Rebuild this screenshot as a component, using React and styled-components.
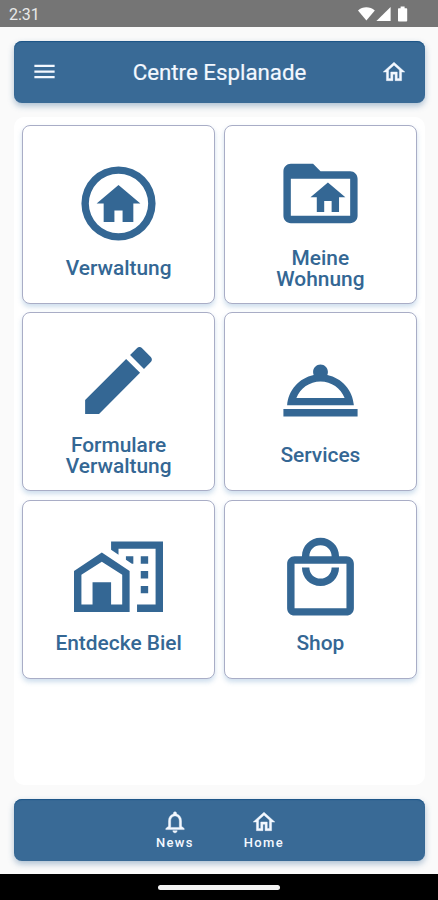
import React from 'react';
import styled, { createGlobalStyle } from 'styled-components';

const icons = {
    menu: 'M3 6h18v2H3zM3 11h18v2H3zM3 16h18v2H3z',
    home: 'M12 5.69L17 10.19V18H15V12H9V18H7V10.19L12 5.69M12 3L2 12H5V20H11V14H13V20H19V12H22Z',
    bell: 'M16 17H8V11c0-2.5 1.5-4.6 4-4.6s4 2.1 4 4.6zM12 22c1.1 0 2-.9 2-2h-4c0 1.1.9 2 2 2zM18 16v-5c0-3.1-1.6-5.6-4.5-6.3V4c0-.8-.7-1.5-1.5-1.5s-1.5.7-1.5 1.5v.7C7.6 5.4 6 7.9 6 11v5l-2.5 2v1h17v-1z',
    homeCircle: 'M12 2a10 10 0 1 0 0 20a10 10 0 1 0 0-20zM12 4a8 8 0 1 1 0 16a8 8 0 1 1 0-16zM12 7l5.9 5H16v5h-2.9v-3.1h-2.2V17H8v-5H6.1z',
    folderHome: 'M20 6h-8l-2-2H4c-1.1 0-2 .9-2 2v12c0 1.1.9 2 2 2h16c1.1 0 2-.9 2-2V8c0-1.1-.9-2-2-2zM20 18H4V8h16zM14 9l4.7 4H17v4h-2v-3h-2v3h-2v-4H9.3z',
    pencil: 'M20.71 7.04C21.1 6.65 21.1 6 20.71 5.63L18.37 3.29C18 2.9 17.35 2.9 16.96 3.29L15.12 5.12L18.87 8.87M3 17.25V21H6.75L17.81 9.93L14.06 6.18L3 17.25Z',
    service: 'M2 17h20v2H2zm11.84-9.21c.1-.24.16-.51.16-.79 0-1.1-.9-2-2-2s-2 .9-2 2c0 .28.06.55.16.79C6.25 8.6 3.27 11.93 3 16h18c-.27-4.07-3.25-7.4-7.16-8.21zM12 9.58c2.95 0 5.47 1.83 6.5 4.41h-13c1.03-2.58 3.55-4.41 6.5-4.41z',
    city: 'M10 2V4.26L12 5.59V4H22V19H17V21H24V2H10M7.5 5L0 10V21H15V10L7.5 5M14 6V6.93L15.61 8H16V6H14M18 6V8H20V6H18M7.5 7.5L13 11V19H10V13H5V19H2V11L7.5 7.5M18 10V12H20V10H18M18 14V16H20V14H18Z',
    shop: 'M19 6H17C17 3.2 14.8 1 12 1S7 3.2 7 6H5C3.9 6 3 6.9 3 8V20C3 21.1 3.9 22 5 22H19C20.1 22 21 21.1 21 20V8C21 6.9 20.1 6 19 6M12 3C13.7 3 15 4.3 15 6H9C9 4.3 10.3 3 12 3M19 20H5V8H19V20M12 12C10.3 12 9 10.7 9 9H7C7 11.8 9.2 14 12 14S17 11.8 17 9H15C15 10.7 13.7 12 12 12Z',
};

const tiles = [
    { icon: 'homeCircle', label: 'Verwaltung' },
    { icon: 'folderHome', label: 'Meine Wohnung' },
    { icon: 'pencil', label: 'Formulare Verwaltung' },
    { icon: 'service', label: 'Services' },
    { icon: 'city', label: 'Entdecke Biel' },
    { icon: 'shop', label: 'Shop' },
];

function Icon({ name, size, bold }) {
    return (
        <IconSvg viewBox="0 0 24 24" $size={size} $bold={bold}>
            <path fillRule="evenodd" d={icons[name]} />
        </IconSvg>
    )
}

export default function App() {
    return (
        <Screen>
            <GlobalStyle />
            <StatusBar>
                <span>2:31</span>
                <svg width="50" height="16" viewBox="0 0 50 16" fill="#fff">
                    <path d="M0 4.4C4.6.2 12 .2 16.8 4.4L8.4 14.6z" />
                    <path d="M32.6 1v14H18.4z" />
                    <path d="M42.6.6h4v1.6h1.6c.6 0 1 .4 1 1v11.200c0 .6-.4 1-1 1H41c-.6 0-1-.4-1-1V3.200c0-.6.4-1 1-1h1.600z" />
                </svg>
            </StatusBar>

            <Content>
                <Header>
                    <Button aria-label="Menu">
                        <Icon name="menu" size={27} />
                    </Button>
                    <Title>Centre Esplanade</Title>
                    <Button aria-label="Home">
                        <Icon name="home" size={26} bold />
                    </Button>
                </Header>

                <Panel>
                    {tiles.map((tile) => (
                        <Tile key={tile.label}>
                            <Icon name={tile.icon} size={89} />
                            <TileLabel>{tile.label}</TileLabel>
                        </Tile>
                    ))}
                </Panel>

                <Footer>
                    <Tab>
                        <Icon name="bell" size={26} bold />
                        <span>News</span>
                    </Tab>
                    <Tab>
                        <Icon name="home" size={26} bold />
                        <span>Home</span>
                    </Tab>
                </Footer>
            </Content>

            <GestureBar>
                <Handle />
            </GestureBar>
        </Screen>
    )
}

const GlobalStyle = createGlobalStyle`
    *{
        box-sizing: border-box;
    }

    body{
        margin: 0;
        background: #fafafa;
        font-family: Roboto, sans-serif;
    }
`;

const Screen = styled.div`
    display: flex;
    flex-direction: column;
    height: 900px;
    overflow: hidden;
`;

const StatusBar = styled.div`
    display: flex;
    justify-content: space-between;
    align-items: center;
    height: 27px;
    padding: 1px 30px 0 9px;
    background: #757575;
    color: #e9e9e9;
    font-size: 16px;
`;

const Content = styled.div`
    flex: 1;
    display: flex;
    flex-direction: column;
    gap: 14px;
    padding: 14px 13px 13px 14px;
`;

const Bar = styled.div`
    display: flex;
    align-items: center;
    height: 62px;
    border-radius: 8px;
    background: #396a96;
    color: #f3f8ff;
    box-shadow: 0 3px 6px rgba(57, 106, 150, 0.4), inset 0 1px 1px #1c5587;
`;

const Header = styled(Bar)`
    justify-content: space-between;
    padding: 0 18px 1px 17px;
`;

const Footer = styled(Bar)`
    justify-content: center;
    gap: 50px;
    padding-left: 1px;
`;

const Title = styled.h1`
    margin: 0;
    font-size: 22.3px;
    font-weight: 400;
    -webkit-text-stroke: 0.2px;
`;

const Button = styled.button`
    display: flex;
    padding: 0;
    border: none;
    background: none;
    color: inherit;
    font: inherit;
    cursor: pointer;
`;

const IconSvg = styled.svg`
    display: block;
    flex: none;
    width: ${(props) => props.$size}px;
    height: ${(props) => props.$size}px;
    fill: currentColor;
    stroke: currentColor;
    stroke-width: ${(props) => (props.$bold ? 0.4 : 0)};
`;

const Panel = styled.main`
    flex: 1;
    display: grid;
    grid-template-columns: 1fr 1fr;
    grid-auto-rows: 179px;
    gap: 8.4px 8.5px;
    padding: 8px;
    border-radius: 10px;
    background: #fff;
`;

const Tile = styled(Button)`
    flex-direction: column;
    align-items: center;
    justify-content: center;
    gap: 10px;
    padding: 9px 30px 0;
    border: 1px solid #a9adc6;
    border-radius: 8px;
    background: #fff;
    color: #346794;
    box-shadow: 0 3px 5px rgba(80, 135, 190, 0.28);
`;

const TileLabel = styled.span`
    font-size: 20.9px;
    font-weight: 500;
    line-height: 21px;
    text-align: center;
`;

const Tab = styled(Button)`
    flex-direction: column;
    align-items: center;
    font-size: 13px;
    font-weight: 500;
    line-height: 16px;
    letter-spacing: 1.3px;
`;

const GestureBar = styled.div`
    display: flex;
    justify-content: center;
    align-items: center;
    height: 26px;
    background: #000;
`;

const Handle = styled.div`
    width: 122px;
    height: 5px;
    border-radius: 3px;
    background: #f4f4f4;
`;
